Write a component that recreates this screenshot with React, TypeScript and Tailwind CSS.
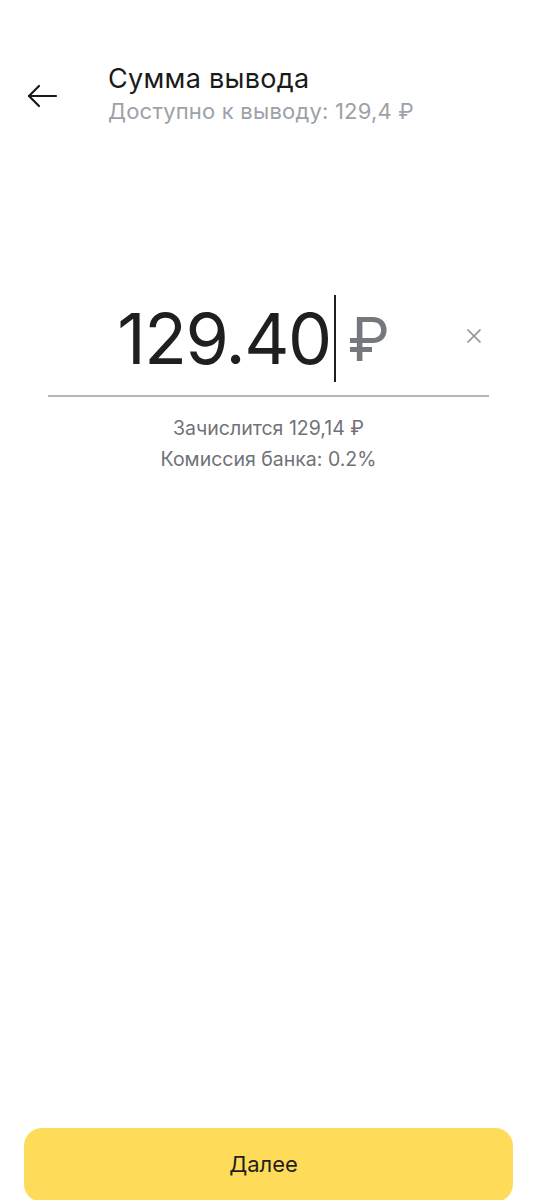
export default function App() {
  return (
    <div
      className="relative h-[1200px] w-[537px] overflow-hidden bg-white"
      style={{ fontFamily: 'Inter, "Noto Sans", sans-serif' }}
    >
      {/* header */}
      <div className="flex items-start pt-[61px]">
        <button className="ml-[26px] mt-[21px] h-[28px] w-[32px] text-[#1a1a1a]">
          <svg viewBox="0 0 32 28" width="32" height="28" fill="none" stroke="currentColor" strokeWidth="2.2" strokeLinecap="round" strokeLinejoin="round">
            <path d="M30 14H3" />
            <path d="M13 4L3 14l10 10" />
          </svg>
        </button>
        <div className="ml-[50px] flex flex-col">
          <span className="text-[27px] leading-[35px] tracking-[0.3px] text-[#1a1a1a]">Сумма вывода</span>
          <span className="text-[22px] leading-[30px] tracking-[0.2px] text-[#9da1a8]">Доступно к выводу: 129,4 ₽</span>
        </div>
      </div>

      {/* amount */}
      <div className="mx-[48px] mt-[175px]">
        <div className="relative flex h-[96px] items-center justify-center border-b-2 border-[#b4b8bf] pb-[18px]">
          <div className="flex items-center pr-[30px]">
            <span className="text-[70px] leading-none tracking-[-1.5px] text-[#1f1f1f]">129.40</span>
            <span className="ml-[3px] mt-[-2px] h-[87px] w-[2px] bg-[#1f1f1f]" />
            <span className="ml-[12px] text-[60px] leading-none text-[#75787d]">₽</span>
          </div>
          <button className="absolute right-[7px] top-[27px] h-[16px] w-[16px] text-[#8d9198]">
            <svg viewBox="0 0 16 16" width="16" height="16" fill="none" stroke="currentColor" strokeWidth="1.7" strokeLinecap="round">
              <path d="M2 2l12 12M14 2L2 14" />
            </svg>
          </button>
        </div>
        <div className="mt-[16px] flex flex-col items-center text-[19.5px] leading-[31px] text-[#6f7278]">
          <span>Зачислится 129,14 ₽</span>
          <span>Комиссия банка: 0.2%</span>
        </div>
      </div>

      {/* bottom button */}
      <div className="absolute bottom-0 left-0 right-0 px-[24px]">
        <button className="mb-[-2px] flex h-[74px] w-full items-center justify-center rounded-[18px] bg-[#fedc5a] pb-[2px] pr-[10px] text-[22px] text-[#1f1f1f]">
          Далее
        </button>
      </div>
    </div>
  );
}
